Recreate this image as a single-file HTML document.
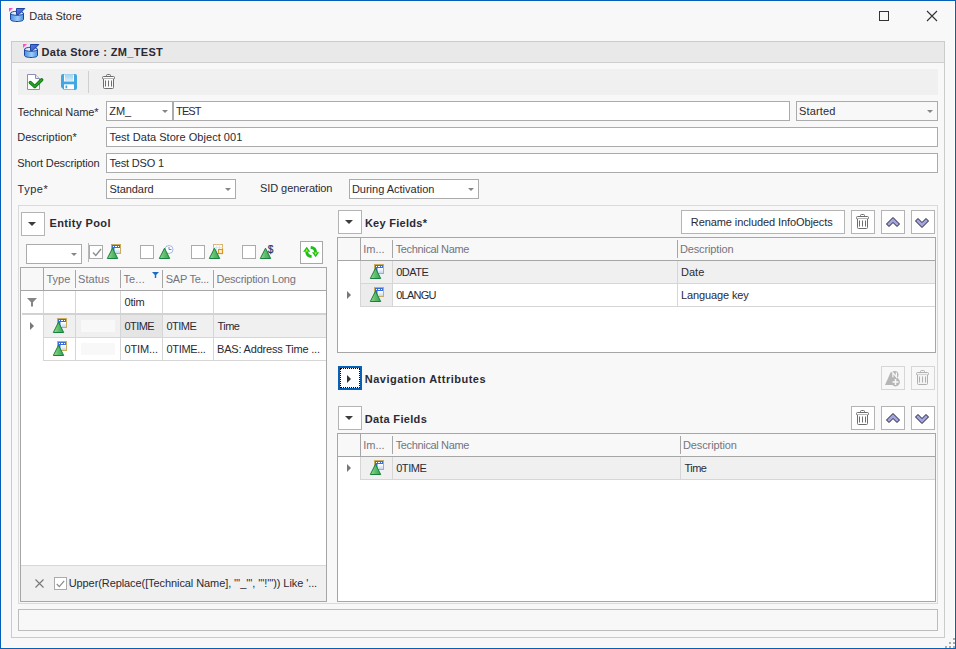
<!DOCTYPE html>
<html lang="en">
<head>
<meta charset="utf-8">
<title>Data Store</title>
<style>
*{box-sizing:border-box;margin:0;padding:0}
html,body{width:956px;height:649px;overflow:hidden;background:#f8f8f8}
body{font-family:"Liberation Sans",sans-serif;font-size:11px;color:#2a2a35;position:relative}
.abs,.t,.in,.btn,.cb,.ln,svg.i{position:absolute}
.t{white-space:nowrap;line-height:13px;height:13px}
.b{font-weight:bold}
.h{color:#74747e}
.in{background:#fff;border:1px solid #ababab;height:20px}
.btn{background:#fff;border:1px solid #b4b4b4}
.cb{background:#fff;border:1px solid #ababab;width:14px;height:14px}
.ln{background:#d6d6d6}
.grid{position:absolute;background:#fff;border:1px solid #a6a6a6;overflow:hidden}
.hd{position:absolute;left:0;top:0;right:0;background:#f8f8f8;border-bottom:1px solid #a6a6a6}
.vs{position:absolute;width:1px;background:#a6a6a6}
.vl{position:absolute;width:1px;background:#d6d6d6}
.hl{position:absolute;height:1px;background:#d6d6d6}
.row{position:absolute;background:#f0f0f0}
.dd{position:absolute;width:0;height:0;border-left:3px solid transparent;border-right:3px solid transparent;border-top:3px solid #858585}
</style>
</head>
<body>

<svg width="0" height="0" style="position:absolute">
 <defs>
  <linearGradient id="gg" x1="0" y1="0" x2="1" y2="0">
   <stop offset="0" stop-color="#a2de8a"/><stop offset="0.5" stop-color="#5cbc6c"/><stop offset="1" stop-color="#38a25a"/>
  </linearGradient>
  <linearGradient id="gb" x1="0" y1="0" x2="0" y2="1">
   <stop offset="0" stop-color="#ffffff"/><stop offset="1" stop-color="#c4d6f0"/>
  </linearGradient>
  <linearGradient id="gs" x1="0" y1="0" x2="0" y2="1">
   <stop offset="0" stop-color="#9fd4ee"/><stop offset="1" stop-color="#d4ecf8"/>
  </linearGradient>
  <linearGradient id="gc" x1="0" y1="0" x2="1" y2="0">
   <stop offset="0" stop-color="#4c8ee0"/><stop offset="0.550" stop-color="#9ccdfa"/><stop offset="1" stop-color="#4c8ee0"/>
  </linearGradient>
  <linearGradient id="gf" x1="0" y1="0" x2="1" y2="1">
   <stop offset="0" stop-color="#5c7ce4"/><stop offset="1" stop-color="#2848b8"/>
  </linearGradient>
  <symbol id="ds" viewBox="0 0 17 15">
   <path d="M0 0h4L0 4z" fill="#ff4cd0"/>
   <path d="M1.500 5.300v6.200c0 1.200 3 2 6.500 2s6.500-0.800 6.500-2v-6.200z" fill="url(#gc)" stroke="#1848a0" stroke-width="1"/>
   <ellipse cx="8" cy="5.300" rx="6.500" ry="2" fill="#e4eefa" stroke="#1848a0" stroke-width="1"/>
   <path d="M7.500 0.500H15.800L9.800 6.600H7.500z" fill="url(#gf)" stroke="#1c44a4" stroke-width="1"/>
  </symbol>
  <g id="tri"><path d="M6.500 5.200L11.700 15.500H1.300z" fill="url(#gg)" stroke="#16803c" stroke-width="1" stroke-linejoin="round"/></g>
  <symbol id="io" viewBox="0 0 16 17">
   <rect x="5.500" y="1.500" width="9" height="9" fill="#fff" stroke="#c9ad5c"/>
   <rect x="6" y="2" width="8" height="3" fill="#3a6ed8"/>
   <rect x="6" y="5" width="2.500" height="5" fill="#3a6ed8"/>
   <rect x="9.300" y="5.500" width="4.700" height="4.500" fill="url(#gb)"/>
   <rect x="7" y="3" width="1" height="1" fill="#fff"/><rect x="9" y="3" width="2" height="1" fill="#fff"/><rect x="12" y="3" width="1" height="1" fill="#fff"/>
   <use href="#tri"/>
  </symbol>
  <symbol id="trash" viewBox="0 0 16 17">
   <path d="M5.500 3.500V2.500a1 1 0 0 1 1-1h2a1 1 0 0 1 1 1V3.500" fill="none" stroke="currentColor"/>
   <rect x="1.500" y="3.500" width="12" height="2.500" rx="1" style="fill:var(--tf,#fff)" stroke="currentColor"/>
   <path d="M2.500 6V14.500a1 1 0 0 0 1 1h8a1 1 0 0 0 1-1V6" style="fill:var(--tf,#fff)" stroke="currentColor"/>
   <path d="M4.500 7.500v6M7.500 7.500v6M10.500 7.500v6" stroke="currentColor" fill="none"/>
  </symbol>
  <symbol id="up" viewBox="0 0 14 10"><path d="M7 0.500L13.500 7L11 9.500L7 5.500L3 9.500L0.500 7z" fill="#a4a4e0" stroke="#1c1c30" stroke-width="1"/></symbol>
  <symbol id="down" viewBox="0 0 14 10"><path d="M0.500 3L3 0.500L7 4.500L11 0.500L13.500 3L7 9.500z" fill="#a4a4e0" stroke="#1c1c30" stroke-width="1"/></symbol>
 </defs>
</svg>
<!-- window frame -->
<div class="abs" style="left:0;top:0;width:956px;height:649px;border:1px solid #0660b8"></div>
<div class="abs" style="left:1px;top:1px;width:954px;height:647px;border:1px solid #fdfdfd"></div>
<div class="abs" style="left:953px;top:638px;width:2px;height:2px;background:#ababab"></div>
<div class="abs" style="left:949px;top:642px;width:2px;height:2px;background:#ababab"></div>
<div class="abs" style="left:953px;top:642px;width:2px;height:2px;background:#ababab"></div>
<div class="abs" style="left:945px;top:646px;width:2px;height:2px;background:#ababab"></div>
<div class="abs" style="left:949px;top:646px;width:2px;height:2px;background:#ababab"></div>
<div class="abs" style="left:953px;top:646px;width:2px;height:2px;background:#ababab"></div>

<!-- title bar -->
<svg class="i" style="left:9px;top:8px" width="17" height="15"><use href="#ds"/></svg>
<div class="t" style="left:29.3px;top:10px;letter-spacing:-0.019px">Data Store</div>
<!-- maximize / close -->
<div class="abs" style="left:879px;top:11px;width:10px;height:10px;border:1px solid #333"></div>
<svg class="i" style="left:926px;top:10px" width="12" height="12" viewBox="0 0 12 12"><path d="M1 1l10 10M11 1L1 11" stroke="#333" stroke-width="1.100" fill="none"/></svg>

<!-- main panel -->
<div class="abs" style="left:11px;top:41px;width:934px;height:597px;border:1px solid #cbcbcb"></div>
<div class="abs" style="left:12px;top:42px;width:932px;height:21px;background:#e9e9e9;border-bottom:1px solid #cfcfcf"></div>
<svg class="i" style="left:23px;top:44px" width="17" height="15"><use href="#ds"/></svg>
<div class="t b" style="left:41.6px;top:46px;letter-spacing:0.33px">Data Store : ZM_TEST</div>

<!-- toolbar -->
<div class="abs" style="left:18px;top:69px;width:920px;height:26px;background:#f0f0f0"></div>
<div class="abs" style="left:88px;top:71px;width:1px;height:22px;background:#cfcfcf"></div>

<!-- toolbar icons -->
<svg class="i" style="left:26px;top:73px" width="18" height="18" viewBox="0 0 18 18">
 <path d="M1.500 1.500H9.500L13.500 5.500V16.500H1.500z" fill="#fff" stroke="#8c8cb8"/>
 <path d="M9.500 1.500V5.500H13.500" fill="#e8e8f4" stroke="#8c8cb8"/>
 <path d="M4.300 9.500L8.800 13.600L15.700 6.800" fill="none" stroke="#0c6c10" stroke-width="3.300" stroke-linecap="round" stroke-linejoin="round"/>
 <path d="M4.300 9.500L8.800 13.600L15.700 6.800" fill="none" stroke="#22a422" stroke-width="1.900" stroke-linecap="round" stroke-linejoin="round"/>
</svg>
<svg class="i" style="left:61px;top:74px" width="16" height="16" viewBox="0 0 16 16">
 <path d="M2 0H14a2 2 0 0 1 2 2V14a2 2 0 0 1-2 2H3L0 13V2a2 2 0 0 1 2-2z" fill="#42a6e0"/>
 <rect x="3" y="0.500" width="10" height="7" fill="#fff"/>
 <rect x="4" y="0.500" width="8" height="6.500" fill="url(#gs)"/>
 <rect x="3" y="10.300" width="10" height="5" fill="#fff"/>
 <rect x="4.500" y="11.500" width="1.700" height="2.800" fill="#42a6e0"/>
</svg>
<svg class="i" style="left:101px;top:73px;color:#6e6e6e;--tf:#fafafa" width="16" height="17"><use href="#trash"/></svg>
<!-- form -->
<div class="t" style="left:17.6px;top:106px;letter-spacing:-0.116px">Technical Name*</div>
<div class="t" style="left:17.2px;top:131px;letter-spacing:0.024px">Description*</div>
<div class="t" style="left:17.2px;top:157px;letter-spacing:-0.122px">Short Description</div>
<div class="t" style="left:17.6px;top:183px;letter-spacing:0.512px">Type*</div>
<div class="t" style="left:260.0px;top:182px;letter-spacing:-0.071px">SID generation</div>

<div class="in" style="left:106px;top:101px;width:67px"></div>
<div class="t" style="left:109.3px;top:105px;letter-spacing:-0.133px">ZM_</div>
<div class="dd" style="left:162px;top:110px"></div>
<div class="in" style="left:173px;top:101px;width:617px"></div>
<div class="t" style="left:176.1px;top:105px;letter-spacing:-0.931px">TEST</div>
<div class="in" style="left:796px;top:101px;width:142px;background:#f8f8f8"></div>
<div class="t" style="left:799.1px;top:105px;letter-spacing:0.147px">Started</div>
<div class="dd" style="left:927px;top:110px"></div>

<div class="in" style="left:106px;top:127px;width:832px"></div>
<div class="t" style="left:109.4px;top:131px;letter-spacing:0.032px">Test Data Store Object 001</div>
<div class="in" style="left:106px;top:153px;width:832px"></div>
<div class="t" style="left:109.4px;top:157px;letter-spacing:-0.165px">Test DSO 1</div>
<div class="in" style="left:106px;top:179px;width:130px"></div>
<div class="t" style="left:109.4px;top:183px;letter-spacing:-0.057px">Standard</div>
<div class="dd" style="left:225px;top:188px"></div>
<div class="in" style="left:349px;top:179px;width:130px"></div>
<div class="t" style="left:351.9px;top:183px;letter-spacing:-0.003px">During Activation</div>
<div class="dd" style="left:468px;top:188px"></div>

<!-- group box -->
<div class="abs" style="left:18px;top:205px;width:920px;height:399px;border:1px solid #dadada"></div>

<!-- entity pool -->
<div class="btn" style="left:21px;top:212px;width:24px;height:24px"></div>
<div class="dd" style="left:27.500px;top:222px;border-left-width:4px;border-right-width:4px;border-top-width:4px;border-top-color:#3c3c3c"></div>
<div class="t b" style="left:49.5px;top:217px;letter-spacing:0.35px">Entity Pool</div>
<div class="in" style="left:26px;top:244px;width:56px"></div>
<div class="dd" style="left:71px;top:253px"></div>
<div class="abs" style="left:88px;top:243px;width:1px;height:19px;background:#b8b8b8"></div>
<div class="cb" style="left:89px;top:245px"></div>
<svg class="i" style="left:91.500px;top:248px" width="10" height="9" viewBox="0 0 10 9"><path d="M1 4.500L3.800 7.500L9 1" fill="none" stroke="#8a8a8a" stroke-width="1.300"/></svg>
<svg class="i" style="left:106px;top:243px" width="16" height="17"><use href="#io"/></svg>
<div class="cb" style="left:140px;top:245px"></div>
<svg class="i" style="left:158px;top:243px" width="16" height="17" viewBox="0 0 16 17">
 <circle cx="11" cy="6.500" r="4" fill="#fff" stroke="#9aaee0" stroke-width="0.900"/>
 <path d="M11 4V6.500H13.500" fill="none" stroke="#5a78c8" stroke-width="0.900"/>
 <use href="#tri"/>
</svg>
<div class="cb" style="left:191px;top:245px"></div>
<svg class="i" style="left:208px;top:243px" width="16" height="17" viewBox="0 0 16 17">
 <rect x="5.500" y="1.500" width="9" height="9" fill="#fff" stroke="#d8b470"/>
 <path d="M5.500 4.500h9M8.500 1.500v9M11.500 1.500v9" stroke="#dfe5f8" fill="none"/>
 <rect x="10.500" y="6.500" width="4" height="4" fill="#fff4d8" stroke="#d89820" stroke-width="1.200"/>
 <use href="#tri"/>
</svg>
<div class="cb" style="left:242px;top:245px"></div>
<svg class="i" style="left:259px;top:243px" width="16" height="17" viewBox="0 0 16 17">
 <use href="#tri"/>
 <text x="8.700" y="9.800" font-family="Liberation Sans, sans-serif" font-size="10" fill="#263a70" stroke="#263a70" stroke-width="0.250">$</text>
</svg>
<div class="btn" style="left:300px;top:241px;width:23px;height:23px;border-color:#a8a8a8"></div>
<svg class="i" style="left:303px;top:246px" width="17" height="13" viewBox="0 0 17 13">
 <path d="M3.700 5.500C3.700 9 6 10.300 8.600 10.600" fill="none" stroke="#18c018" stroke-width="2.900"/>
 <path d="M3.700 0.800L7.300 5.800H0.100z" fill="#18c018"/>
 <path d="M3.700 2.800L5 5.400H2.400z" fill="#b4f020"/>
 <path d="M12.600 6.500C12.600 3 10.300 1.700 7.700 1.400" fill="none" stroke="#18c018" stroke-width="2.900"/>
 <path d="M12.600 11.200L9 6.200H16.200z" fill="#18c018"/>
 <path d="M12.600 9.200L11.300 6.600H13.900z" fill="#b4f020"/>
</svg>

<div class="grid" style="left:20px;top:267px;width:307px;height:335px">
 <div class="hd" style="height:23px"></div>
 <div class="abs" style="left:0;top:297px;width:2px;height:36px;background:#f0f0f0;border-top:1px solid #d8d8d8"></div>
 <div class="abs" style="left:1px;top:0;width:304px;height:333px">
 <div class="vs" style="left:21px;top:0;height:23px"></div>
 <div class="vs" style="left:53px;top:2px;height:18px"></div>
 <div class="vs" style="left:98px;top:2px;height:18px"></div>
 <div class="vs" style="left:140px;top:2px;height:18px"></div>
 <div class="vs" style="left:191px;top:2px;height:18px"></div>
 <div class="t h" style="left:24.5px;top:5px;letter-spacing:-0.015px">Type</div>
 <div class="t h" style="left:56.0px;top:5px;letter-spacing:0.069px">Status</div>
 <div class="t h" style="left:101.5px;top:5px;letter-spacing:0.101px">Te...</div>
 <div class="t h" style="left:143.8px;top:5px;letter-spacing:-0.263px">SAP Te...</div>
 <div class="t h" style="left:194.4px;top:5px;letter-spacing:-0.204px">Description Long</div>
 <svg class="i" style="left:130px;top:4px" width="7" height="6" viewBox="0 0 7 6"><path d="M0 0H7L4.200 3V6H2.800V3z" fill="#1c6cc4"/></svg>
 <!-- rows -->
 <div class="row" style="left:22px;top:46px;width:283px;height:23px"></div>
 <div class="abs" style="left:99px;top:46px;width:41px;height:23px;background:#e5e5e5"></div>
 <div class="abs" style="left:59px;top:52px;width:34px;height:12px;background:#f8f8f8"></div>
 <div class="abs" style="left:59px;top:75px;width:34px;height:12px;background:#f8f8f8"></div>
 <div class="vl" style="left:21px;top:23px;height:70px"></div>
 <div class="vl" style="left:53px;top:23px;height:70px"></div>
 <div class="vl" style="left:98px;top:23px;height:70px"></div>
 <div class="vl" style="left:140px;top:23px;height:70px"></div>
 <div class="vl" style="left:191px;top:23px;height:70px"></div>
 <div class="hl" style="left:0;top:45px;width:305px;height:2px;background:#d2d2d2"></div>
 <div class="hl" style="left:22px;top:69px;width:283px"></div>
 <div class="hl" style="left:22px;top:92px;width:283px"></div>
 <svg class="i" style="left:5px;top:30px" width="10" height="9" viewBox="0 0 10 9"><path d="M0 0H10L6 4.200V8.500H4V4.200z" fill="#858585"/></svg>
 <svg class="i" style="left:8px;top:54px" width="4" height="8" viewBox="0 0 4 8"><path d="M0 0L4 4L0 8z" fill="#777"/></svg>
 <svg class="i" style="left:30px;top:49px" width="16" height="17"><use href="#io"/></svg>
 <svg class="i" style="left:30px;top:72px" width="16" height="17"><use href="#io"/></svg>
 <div class="t" style="left:102.5px;top:28px;letter-spacing:-0.17px">0tim</div>
 <div class="t" style="left:102.4px;top:52px;letter-spacing:-0.541px">0TIME</div>
 <div class="t" style="left:144.5px;top:52px;letter-spacing:-0.541px">0TIME</div>
 <div class="t" style="left:195.6px;top:52px;letter-spacing:-0.587px">Time</div>
 <div class="t" style="left:102.4px;top:75px;letter-spacing:-0.091px">0TIM...</div>
 <div class="t" style="left:144.5px;top:75px;letter-spacing:-0.333px">0TIME...</div>
 <div class="t" style="left:195.1px;top:75px;letter-spacing:-0.205px">BAS: Address Time ...</div>
 <!-- filter panel -->
 <div class="abs" style="left:0;top:297px;width:304px;height:36px;background:#f0f0f0;border-top:1px solid #d8d8d8"></div>
 <svg class="i" style="left:13px;top:311px" width="9" height="9" viewBox="0 0 9 9"><path d="M0.500 0.500L8.500 8.500M8.500 0.500L0.500 8.500" stroke="#777" stroke-width="1.100" fill="none"/></svg>
 <div class="cb" style="left:32px;top:309px;width:13px;height:13px"></div>
 <svg class="i" style="left:34px;top:312px" width="9" height="8" viewBox="0 0 9 8"><path d="M0.800 4L3.300 6.700L8.200 0.800" fill="none" stroke="#8a8a8a" stroke-width="1.200"/></svg>
 <div class="t" style="left:46.7px;top:309px;letter-spacing:-0.085px">Upper(Replace([Technical Name], '''_''', '''!''')) Like '...</div>
</div>
</div>

<!-- key fields -->
<div class="btn" style="left:338px;top:210px;width:24px;height:24px"></div>
<div class="dd" style="left:344.500px;top:220px;border-left-width:4px;border-right-width:4px;border-top-width:4px;border-top-color:#3c3c3c"></div>
<div class="t b" style="left:364.9px;top:217px;letter-spacing:0.281px">Key Fields*</div>
<div class="btn" style="left:681px;top:210px;width:164px;height:24px"></div>
<div class="t" style="left:690.8px;top:216px;letter-spacing:-0.093px">Rename included InfoObjects</div>
<div class="btn" style="left:851px;top:210px;width:24px;height:24px"></div>
<svg class="i" style="left:855px;top:213px;color:#6e6e6e" width="16" height="17"><use href="#trash"/></svg>
<div class="btn" style="left:881px;top:210px;width:24px;height:24px"></div>
<svg class="i" style="left:885.500px;top:216.500px" width="14" height="10"><use href="#up"/></svg>
<div class="btn" style="left:911px;top:210px;width:24px;height:24px"></div>
<svg class="i" style="left:914.500px;top:217.500px" width="14" height="10"><use href="#down"/></svg>

<div class="grid" style="left:337px;top:237px;width:599px;height:116px">
 <div class="hd" style="height:23px"></div>
 <div class="vs" style="left:22px;top:0;height:23px"></div>
 <div class="vs" style="left:54px;top:2px;height:18px"></div>
 <div class="vs" style="left:339px;top:2px;height:18px"></div>
 <div class="t h" style="left:25.2px;top:5px;letter-spacing:0.002px">Im...</div>
 <div class="t h" style="left:57.7px;top:5px;letter-spacing:-0.348px">Technical Name</div>
 <div class="t h" style="left:341.9px;top:5px;letter-spacing:-0.121px">Description</div>
 <div class="row" style="left:23px;top:23px;width:575px;height:23px"></div>
 <div class="row" style="left:23px;top:46px;width:31px;height:23px;background:#ececec"></div>
 <div class="vl" style="left:22px;top:23px;height:46px"></div>
 <div class="vl" style="left:54px;top:23px;height:46px"></div>
 <div class="vl" style="left:339px;top:23px;height:46px"></div>
 <div class="hl" style="left:23px;top:45px;width:575px"></div>
 <div class="hl" style="left:23px;top:68px;width:575px"></div>
 <svg class="i" style="left:9px;top:53px" width="4" height="8" viewBox="0 0 4 8"><path d="M0 0L4 4L0 8z" fill="#777"/></svg>
 <svg class="i" style="left:31px;top:25px" width="16" height="17"><use href="#io"/></svg>
 <svg class="i" style="left:31px;top:48px" width="16" height="17"><use href="#io"/></svg>
 <div class="t" style="left:58.2px;top:28px;letter-spacing:-0.488px">0DATE</div>
 <div class="t" style="left:342.9px;top:28px;letter-spacing:0.062px">Date</div>
 <div class="t" style="left:58.2px;top:51px;letter-spacing:-0.755px">0LANGU</div>
 <div class="t" style="left:342.9px;top:51px;letter-spacing:-0.11px">Language key</div>
</div>

<!-- navigation attributes -->
<div class="abs" style="left:338px;top:366px;width:24px;height:24px;background:#fff;border:2px solid #0660b8"></div>
<div class="abs" style="left:340px;top:368px;width:20px;height:20px;border:1px dotted #000"></div>
<svg class="i" style="left:347px;top:374.500px" width="4" height="8" viewBox="0 0 4 8"><path d="M0 0L4 4L0 8z" fill="#333"/></svg>
<div class="t b" style="left:364.8px;top:373px;letter-spacing:0.499px">Navigation Attributes</div>
<div class="btn" style="left:881px;top:366px;width:24px;height:24px;background:#f8f8f8;border-color:#d6d6d6"></div>
<svg class="i" style="left:884px;top:370px" width="17" height="17" viewBox="0 0 17 17">
 <path d="M7 1.500L1 15H12z" fill="#b6b6b6"/>
 <circle cx="10.700" cy="4.800" r="3.800" fill="#b6b6b6"/>
 <circle cx="11.500" cy="12" r="4.400" fill="#b6b6b6"/>
 <path d="M11.500 9v6M8.500 12h6" stroke="#f8f8f8" stroke-width="1.500"/>
 <path d="M8.900 7.200V2.600L12.400 7V2.400" fill="none" stroke="#f8f8f8" stroke-width="1.200"/>
</svg>
<div class="btn" style="left:911px;top:366px;width:24px;height:24px;background:#f8f8f8;border-color:#d6d6d6"></div>
<svg class="i" style="left:915px;top:369px;color:#b0b0b0;--tf:#f4f4f4" width="16" height="17"><use href="#trash"/></svg>

<!-- data fields -->
<div class="btn" style="left:338px;top:406px;width:24px;height:24px"></div>
<div class="dd" style="left:344.500px;top:416px;border-left-width:4px;border-right-width:4px;border-top-width:4px;border-top-color:#3c3c3c"></div>
<div class="t b" style="left:364.8px;top:413px;letter-spacing:0.328px">Data Fields</div>
<div class="btn" style="left:851px;top:406px;width:24px;height:24px"></div>
<svg class="i" style="left:855px;top:409px;color:#6e6e6e" width="16" height="17"><use href="#trash"/></svg>
<div class="btn" style="left:881px;top:406px;width:24px;height:24px"></div>
<svg class="i" style="left:885.500px;top:412.500px" width="14" height="10"><use href="#up"/></svg>
<div class="btn" style="left:911px;top:406px;width:24px;height:24px"></div>
<svg class="i" style="left:914.500px;top:413.500px" width="14" height="10"><use href="#down"/></svg>

<div class="grid" style="left:337px;top:433px;width:599px;height:169px">
 <div class="hd" style="height:23px"></div>
 <div class="vs" style="left:22px;top:0;height:23px"></div>
 <div class="vs" style="left:54px;top:2px;height:18px"></div>
 <div class="vs" style="left:342px;top:2px;height:18px"></div>
 <div class="t h" style="left:25.2px;top:5px;letter-spacing:0.002px">Im...</div>
 <div class="t h" style="left:57.7px;top:5px;letter-spacing:-0.348px">Technical Name</div>
 <div class="t h" style="left:345.0px;top:5px;letter-spacing:-0.112px">Description</div>
 <div class="row" style="left:23px;top:23px;width:575px;height:23px"></div>
 <div class="vl" style="left:22px;top:23px;height:23px"></div>
 <div class="vl" style="left:54px;top:23px;height:23px"></div>
 <div class="vl" style="left:342px;top:23px;height:23px"></div>
 <div class="hl" style="left:23px;top:45px;width:575px"></div>
 <svg class="i" style="left:9px;top:30px" width="4" height="8" viewBox="0 0 4 8"><path d="M0 0L4 4L0 8z" fill="#777"/></svg>
 <svg class="i" style="left:31px;top:25px" width="16" height="17"><use href="#io"/></svg>
 <div class="t" style="left:58.2px;top:28px;letter-spacing:-0.441px">0TIME</div>
 <div class="t" style="left:346.5px;top:28px;letter-spacing:-0.537px">Time</div>
</div>

<!-- status box -->
<div class="abs" style="left:18px;top:609px;width:920px;height:22px;border:1px solid #bdbdbd"></div>

</body>
</html>
